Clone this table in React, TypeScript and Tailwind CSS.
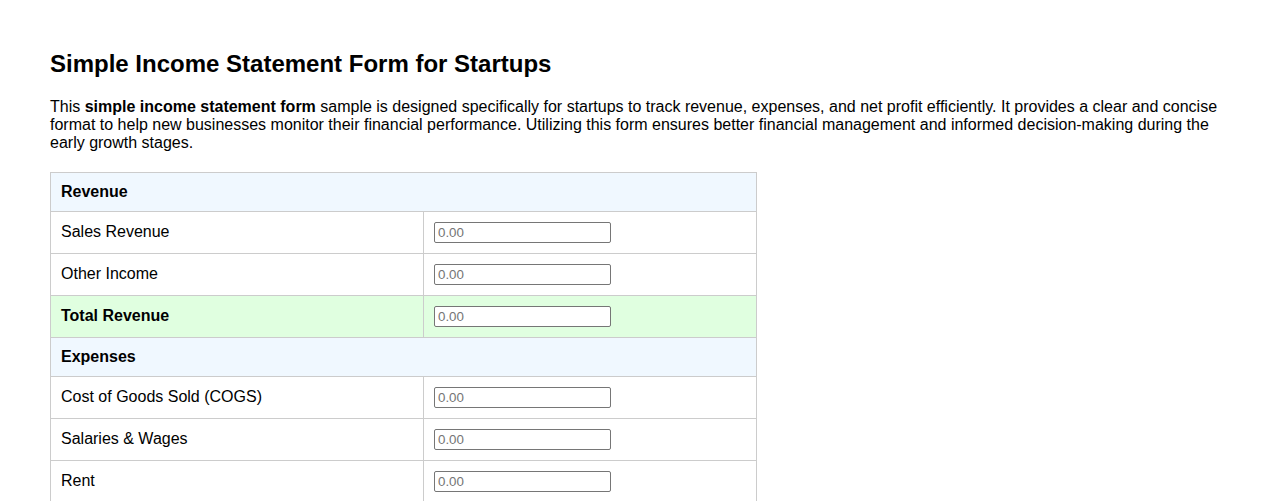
import React from "react";

type Row = { kind: "section" | "item" | "total"; label: string };

const rows: Row[] = [
  { kind: "section", label: "Revenue" },
  { kind: "item", label: "Sales Revenue" },
  { kind: "item", label: "Other Income" },
  { kind: "total", label: "Total Revenue" },
  { kind: "section", label: "Expenses" },
  { kind: "item", label: "Cost of Goods Sold (COGS)" },
  { kind: "item", label: "Salaries & Wages" },
  { kind: "item", label: "Rent" },
  { kind: "item", label: "Utilities" },
  { kind: "item", label: "Marketing & Advertising" },
];

function Money() {
  return (
    <input
      type="number"
      placeholder="0.00"
      className="block w-[177px] h-[21px] px-[3px] border border-[#767676] rounded-[2px] bg-white text-[13.33px] leading-[15px] text-black placeholder:text-[#757575] outline-none [font-family:'Liberation_Sans',Arial,sans-serif]"
    />
  );
}

export default function App() {
  return (
    <div className="bg-white min-h-screen pl-[50px] pr-[10px] pt-[50px] text-black [font-family:'Liberation_Sans',Arial,sans-serif]">
      <h1 className="text-[24px] leading-[27.6px] font-bold">Simple Income Statement Form for Startups</h1>
      <p className="mt-[20px] max-w-[1212px] text-[16px] leading-[18.4px]">
        This <strong>simple income statement form</strong> sample is designed specifically for startups to track revenue,
        expenses, and net profit efficiently. It provides a clear and concise
        <br />
        format to help new businesses monitor their financial performance. Utilizing this form ensures better financial
        management and informed decision-making during the
        <br />
        early growth stages.
      </p>
      <table className="mt-[19px] w-[707px] border-collapse text-[16px] leading-[18.4px]">
        <tbody>
          {rows.map((r, i) =>
            r.kind === "section" ? (
              <tr key={i} className="bg-[#f0f8ff] h-[39px]">
                <td colSpan={2} className="border border-[#cccccc] px-[10px] py-0 font-bold">
                  {r.label}
                </td>
              </tr>
            ) : (
              <tr key={i} className={`h-[42px] ${r.kind === "total" ? "bg-[#e0ffe0]" : ""}`}>
                <td className={`w-[373px] border border-[#cccccc] px-[10px] py-0 pb-[1px] ${r.kind === "total" ? "font-bold" : ""}`}>
                  {r.label}
                </td>
                <td className="border border-[#cccccc] px-[10px] py-0">
                  <Money />
                </td>
              </tr>
            )
          )}
        </tbody>
      </table>
    </div>
  );
}
